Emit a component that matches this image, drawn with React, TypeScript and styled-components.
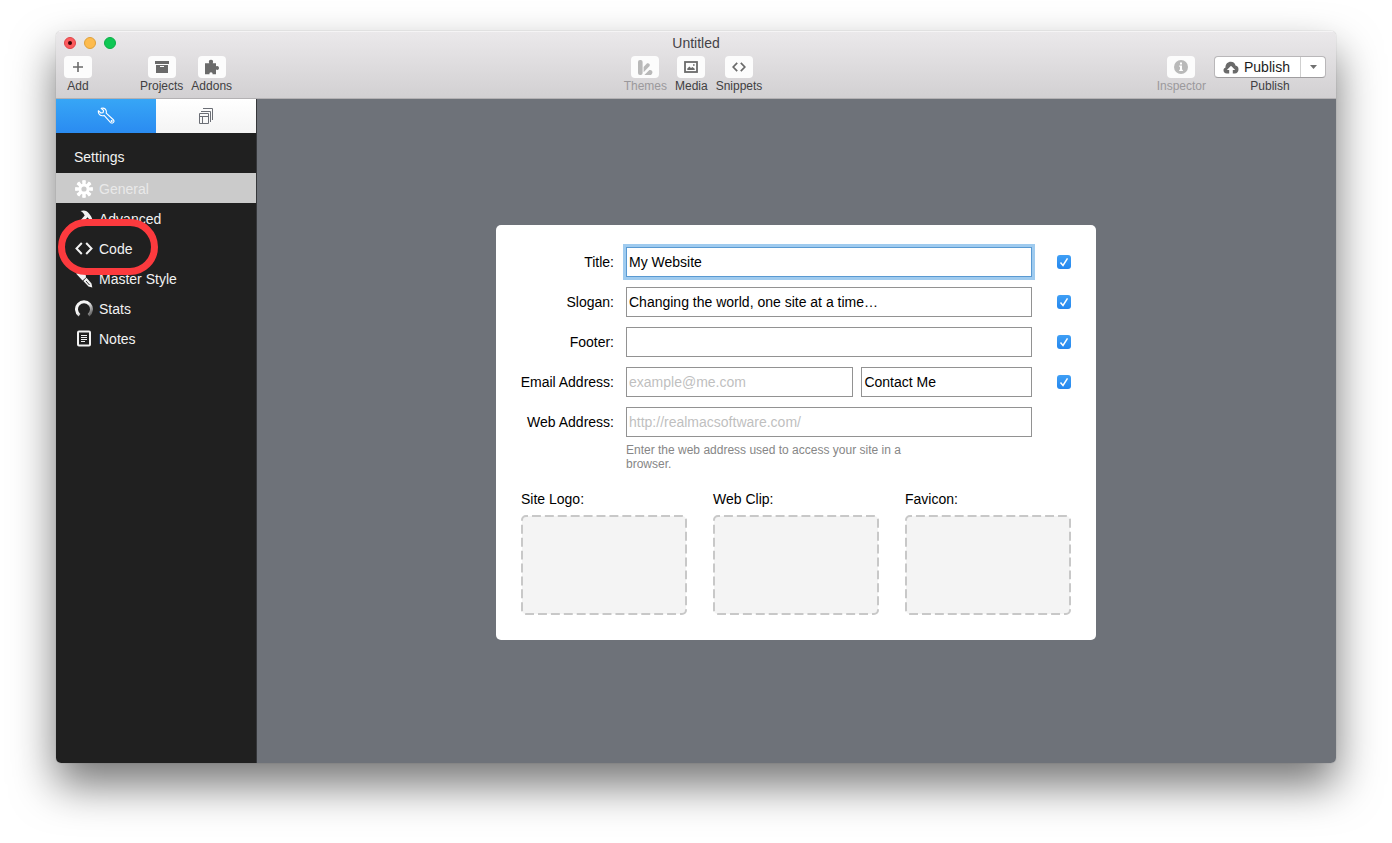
import React, { useId } from "react";
import styled, { createGlobalStyle, css } from "styled-components";

const GlobalStyle = createGlobalStyle`
  *, *::before, *::after { box-sizing: border-box; }
  body {
    margin: 0;
    background: #fff;
    color: #000;
    font-family: "Liberation Sans", Arial, sans-serif;
    font-size: 14px;
    line-height: 16px;
  }
  button, input { font: inherit; color: inherit; margin: 0; }
  svg { display: block; }
`;

const Desktop = styled.div`
  display: flex;
  min-height: 100vh;
  padding: 31px 56px 80px;
`;

const Window = styled.div`
  flex: 1;
  display: flex;
  flex-direction: column;
  min-width: 0;
  border-radius: 5px;
  overflow: hidden;
  box-shadow: 0 0 1px rgba(0, 0, 0, 0.4), 0 22px 44px rgba(0, 0, 0, 0.54);
`;

const TitleBar = styled.header`
  background: linear-gradient(#ebe9eb, #d2d0d2);
  border-bottom: 1px solid #b3b1b3;
  box-shadow: inset 0 1px 0 #f5f4f5;
  padding-top: 3px;
`;

const TitleRow = styled.div`
  display: grid;
  grid-template-columns: 1fr auto 1fr;
  align-items: center;
  padding: 0 8px;
  height: 17px;
`;

const Lights = styled.div`
  display: flex;
  gap: 8px;
`;

const Light = styled.button<{ $fill: string; $edge: string }>`
  display: grid;
  place-items: center;
  width: 12px;
  height: 12px;
  padding: 0;
  border: 1px solid ${(p) => p.$edge};
  border-radius: 50%;
  background: ${(p) => p.$fill};
`;

const UnsavedDot = styled.span`
  width: 4px;
  height: 4px;
  border-radius: 50%;
  background: #3c0306;
`;

const DocumentTitle = styled.h1`
  margin: 0;
  font-size: 14px;
  font-weight: 400;
  color: #444246;
`;

const Toolbar = styled.div`
  display: grid;
  grid-template-columns: 1fr auto 1fr;
  padding: 5px 10px 5px 8px;
`;

const ToolGroup = styled.div<{ $place?: "center" | "end" }>`
  display: flex;
  gap: 8px;
  ${(p) => p.$place === "center" && "padding-right: 4px;"}
  ${(p) => p.$place === "end" && "justify-content: flex-end;"}
`;

const ToolSpacer = styled.span`
  width: 32px;
`;

const Tool = styled.button<{ $muted?: boolean }>`
  display: flex;
  flex-direction: column;
  align-items: center;
  gap: 1px;
  padding: 0;
  border: 0;
  background: none;
  font-size: 12px;
  line-height: 14px;
  color: ${(p) => (p.$muted ? "#9b999c" : "#414042")};
`;

const ToolFace = styled.span<{ $muted?: boolean }>`
  display: grid;
  place-items: center;
  width: 28px;
  height: 22px;
  border-radius: 4px;
  background: #fcfcfc;
  color: ${(p) => (p.$muted ? "#b9b9b9" : "#6a6a6a")};
`;

const PublishBlock = styled.div`
  display: flex;
  flex-direction: column;
  align-items: center;
  gap: 1px;
  font-size: 12px;
  line-height: 14px;
  color: #414042;
`;

const SplitButton = styled.div`
  display: flex;
  height: 22px;
  border: 1px solid #b9b7b9;
  border-bottom-color: #9f9d9f;
  border-radius: 4px;
  background: #fff;
  overflow: hidden;
`;

const SplitMain = styled.button`
  display: flex;
  align-items: center;
  gap: 5px;
  width: 85px;
  padding: 0 0 0 8px;
  border: 0;
  background: none;
  font-size: 14px;
  color: #1c1c1c;
`;

const SplitArrow = styled.button`
  display: grid;
  place-items: center;
  width: 25px;
  padding: 0;
  border: 0;
  border-left: 1px solid #cfcfcf;
  background: none;
  color: #707070;
`;

const Body = styled.div`
  flex: 1;
  display: flex;
`;

const Sidebar = styled.nav`
  width: 201px;
  flex: none;
  background: #202020;
  border-right: 1px solid #35373a;
`;

const Tabs = styled.div`
  display: grid;
  grid-template-columns: 1fr 1fr;
  height: 34px;
`;

const Tab = styled.button<{ $active?: boolean }>`
  display: grid;
  place-items: center;
  padding: 0;
  border: 0;
  ${(p) =>
    p.$active
      ? css`
          background: linear-gradient(#37a6f6, #2a8bf1);
          color: #fff;
        `
      : css`
          background: linear-gradient(#fff, #f4f4f4);
          color: #6b6e75;
        `}
`;

const SidebarHeading = styled.h2`
  margin: 0;
  padding: 16px 18px 8px;
  font-size: 14px;
  line-height: 16px;
  font-weight: 400;
  color: #f2f2f2;
`;

const List = styled.ul`
  list-style: none;
  margin: 0;
  padding: 0;
`;

const Item = styled.li`
  position: relative;
`;

const ItemButton = styled.button<{ $selected?: boolean }>`
  display: flex;
  align-items: center;
  gap: 6px;
  width: 100%;
  height: 30px;
  padding: 2px 19px 0;
  border: 0;
  text-align: left;
  background: ${(p) => (p.$selected ? "#cbcbcb" : "transparent")};
  color: ${(p) => (p.$selected ? "#e9e9e9" : "#f2f2f2")};
`;

const Ring = styled.span`
  position: absolute;
  z-index: 1;
  top: -14px;
  left: 2px;
  width: 100px;
  height: 56px;
  border: 7px solid #fc3a3e;
  border-radius: 28px;
  pointer-events: none;
`;

const Workspace = styled.main`
  flex: 1;
  display: grid;
  place-items: center;
  padding: 27px 25px 24px 24px;
  background: #6e7279;
`;

const Card = styled.form`
  width: 100%;
  max-width: 600px;
  padding: 22px 25px 25px;
  border-radius: 5px;
  background: #fff;
`;

const Fields = styled.div`
  display: grid;
  gap: 10px;
`;

const Row = styled.div`
  display: grid;
  grid-template-columns: 93px 1fr 27px;
  column-gap: 12px;
  align-items: center;
`;

const FieldLabel = styled.label`
  justify-self: end;
  white-space: nowrap;
`;

const Pair = styled.div`
  display: grid;
  grid-template-columns: 4fr 3fr;
  gap: 8px;
`;

const TextBox = styled.input<{ $focused?: boolean }>`
  width: 100%;
  min-width: 0;
  height: 30px;
  padding: 0 2px;
  border: 1px solid ${(p) => (p.$focused ? "#5a9ad2" : "#929292")};
  outline: none;
  background: #fff;
  ${(p) => p.$focused && "box-shadow: 0 0 0 3px #9fcbef;"}
  &::placeholder { color: #bfbfbf; opacity: 1; }
`;

const CheckWrap = styled.span`
  display: grid;
  justify-self: end;
  width: 14px;
  height: 14px;
  & > * { grid-area: 1 / 1; }
`;

const Check = styled.input`
  appearance: none;
  width: 14px;
  height: 14px;
  border-radius: 3px;
  background: linear-gradient(#3f9ff5, #2487ee);
`;

const CheckMark = styled.svg`
  pointer-events: none;
`;

const Hint = styled.p`
  width: 280px;
  margin: 6px 0 0 105px;
  font-size: 12px;
  line-height: 14px;
  color: #868686;
`;

const Wells = styled.div`
  display: grid;
  grid-template-columns: repeat(3, 1fr);
  gap: 26px;
  margin-top: 20px;
`;

const WellBlock = styled.div`
  display: grid;
  gap: 8px;
`;

const Well = styled.button`
  display: block;
  width: 100%;
  height: 100px;
  padding: 0;
  border: 0;
  background: none;
`;

const icon = (w: number, h = w) => ({
  width: w,
  height: h,
  viewBox: `0 0 ${w} ${h}`,
  fill: "none",
  "aria-hidden": true,
});

const PlusIcon = () => (
  <svg {...icon(12)} stroke="currentColor" strokeWidth="1.6"><path d="M6 1v10M1 6h10" /></svg>
);
const BoxIcon = () => (
  <svg {...icon(14, 12)} fill="currentColor">
    <path d="M0 0h14v3H0z" />
    <path fillRule="evenodd" d="M1 4h12v8H1zM5 5v1h4V5z" />
  </svg>
);
const PuzzleIcon = () => (
  <svg {...icon(16)} fill="currentColor">
    <path d="M1 4.200h4.300C4.300 2.500 5 .7 7 .7s2.700 1.800 1.700 3.500H12v3.300c1.200-1 3-.4 3 1.500s-1.800 2.500-3 1.500v4.700H8.500c.3-1.200-.5-1.900-1.500-1.900s-1.800.7-1.500 1.900H1z" />
  </svg>
);
const ThemesIcon = () => (
  <svg {...icon(15)} fill="currentColor">
    <rect width="4.600" height="15" rx="2" />
    <path d="M5.600 7 8.600 3.700c1.500-1.300 4 .3 3 2.300L5.600 12.300z" />
    <path d="m6.400 15 5-5c2.700-.7 3.800 2.300 2.500 4l-1 1z" />
  </svg>
);
const MediaIcon = () => (
  <svg {...icon(14, 12)}>
    <rect x="1" y="1" width="12" height="10" stroke="currentColor" strokeWidth="1.800" />
    <path fill="currentColor" d="M3.300 9V7.600L5.500 5.500 7 7l1.500-1 2.200 1.800V9zM9 3.200h1.600v1.600H9z" />
  </svg>
);
const SnippetsIcon = () => (
  <svg {...icon(14, 10)} stroke="currentColor" strokeWidth="1.700">
    <path d="M5.200.8 1.200 5l4 4.200M8.800.8l4 4.200-4 4.200" />
  </svg>
);
const InfoIcon = () => (
  <svg {...icon(14)}>
    <circle cx="7" cy="7" r="7" fill="currentColor" />
    <path d="M6 2.500h2v2H6zM5.200 5.600H8v4.200h.9v1.200H5.200V9.800H6V6.800h-.8z" fill="#fff" />
  </svg>
);
const CloudIcon = () => (
  <svg {...icon(16, 13)} fill="#6a6a6a">
    <path d="M4 12.500C1.500 12.500.5 11 .5 9.300c0-1.500.8-2.500 2-2.900C2.300 3 4.800.7 7.800.7c2.600 0 4.300 1.600 4.700 3.800 1.900.3 3 1.700 3 3.800 0 2.500-1.300 4.200-3.800 4.200H9.800V9h2.400L8 4.800 3.900 9h2.300v3.500z" />
  </svg>
);
const CaretIcon = () => (
  <svg {...icon(7, 4)} fill="currentColor"><path d="M0 0h7L3.500 4z" /></svg>
);
const WrenchIcon = () => (
  <svg {...icon(18)} stroke="currentColor" strokeWidth="1.100" strokeLinejoin="round">
    <path d="M4.200 1.400c2-.6 4.300.2 5 2.300.3.900.2 1.600 0 2.400l6.900 6.400c1 1 1 2.200.3 3s-2 .8-3-.2L7.100 8.400c-2 .7-4.200 0-5.200-1.700-.6-1-.7-2-.5-3l2.500 2.300 2.200-.4.500-2.100z" />
    <circle cx="14.700" cy="14" r=".5" />
  </svg>
);
const PagesIcon = () => (
  <svg {...icon(14, 16)} stroke="currentColor">
    <path d="M.5 5.500h9v10h-9zM.5 8.500h9M3.500 8.500v7M2 3.500h9.500V14M4 .5h9.500V12" />
  </svg>
);
const GearIcon = () => (
  <svg {...icon(18)} viewBox="-9 -9 18 18">
    <g fill="#fff">
      {[0, 45, 90, 135, 180, 225, 270, 315].map((a) => (
        <path key={a} transform={`rotate(${a})`} d="M-1.600-4.500-1.900-8.600q1.900-.8 3.800 0L1.600-4.500z" />
      ))}
    </g>
    <circle r="4.100" stroke="#fff" strokeWidth="3" />
  </svg>
);
const HammerIcon = () => (
  <svg {...icon(18)} fill="#f2f2f2">
    <path d="M5.500 1C9-.3 12 .5 14 3.500l2 2.700 1.200 2.600-2.200 1.400-2.500-3L4 17 1.500 15 9.700 5.500C8.700 3 7.500 2 5.500 1z" />
  </svg>
);
const CodeIcon = () => (
  <svg {...icon(18)} stroke="#f2f2f2" strokeWidth="2">
    <path d="M6.800 3 1.500 8.500l5.300 5.500M11.200 3l5.300 5.500-5.300 5.500" />
  </svg>
);
const BrushIcon = () => (
  <svg {...icon(18)} fill="#f2f2f2">
    <path d="M1 3.500 10.500 2 11 7.500 7.500 10.500zM8.300 11l3.200-3.200 5 5.700.8 4-3.800-1z" />
    <path d="m11 11 3.500 4" stroke="#202020" strokeWidth=".9" />
  </svg>
);
const StatsIcon = () => {
  const id = useId();
  return (
    <svg {...icon(18)}>
      <defs>
        <linearGradient id={id} x1="0" y1="0" x2="1" y2="1">
          <stop offset=".45" stopColor="#f4f4f4" />
          <stop offset="1" stopColor="#555" />
        </linearGradient>
      </defs>
      <path d="M4.500 15.200a7.500 7.500 0 1 1 9 0" stroke={`url(#${id})`} strokeWidth="3" />
    </svg>
  );
};
const NotesIcon = () => (
  <svg {...icon(18)} stroke="#f2f2f2">
    <rect x="3" y="1.500" width="12" height="14" rx="1" strokeWidth="2" />
    <path d="M6 5.500h6M6 7.500h6M6 9.500h6M6 11.500h4" />
  </svg>
);

const settings = [
  { name: "General", Icon: GearIcon, selected: true },
  { name: "Advanced", Icon: HammerIcon },
  { name: "Code", Icon: CodeIcon, ringed: true },
  { name: "Master Style", Icon: BrushIcon },
  { name: "Stats", Icon: StatsIcon },
  { name: "Notes", Icon: NotesIcon },
];

function ToolItem({ label, muted, children }: { label: string; muted?: boolean; children: React.ReactNode }) {
  return (
    <Tool type="button" $muted={muted} disabled={muted}>
      <ToolFace $muted={muted}>{children}</ToolFace>
      {label}
    </Tool>
  );
}

function Toggle({ label }: { label: string }) {
  return (
    <CheckWrap>
      <Check type="checkbox" defaultChecked aria-label={label} />
      <CheckMark {...icon(14)} stroke="#fff" strokeWidth="1.500">
        <path d="m3.500 7.500 2.500 3L10.500 3.300" />
      </CheckMark>
    </CheckWrap>
  );
}

function ImageWell({ label }: { label: string }) {
  const id = useId();
  return (
    <WellBlock>
      <label htmlFor={id}>{label}</label>
      <Well type="button" id={id}>
        <svg width="100%" height="100%" viewBox="0 0 166 100" preserveAspectRatio="none" aria-hidden="true">
          <rect
            x="1"
            y="1"
            width="164"
            height="98"
            rx="4"
            fill="#f4f4f4"
            stroke="#c8c8c8"
            strokeWidth="2"
            pathLength="520"
            strokeDasharray="9 4"
            strokeDashoffset="7"
          />
        </svg>
      </Well>
    </WellBlock>
  );
}

export default function App() {
  return (
    <>
      <GlobalStyle />
      <Desktop>
        <Window>
          <TitleBar>
            <TitleRow>
              <Lights>
                <Light type="button" aria-label="Close" $fill="#fc5b5e" $edge="#df4448">
                  <UnsavedDot />
                </Light>
                <Light type="button" aria-label="Minimize" $fill="#fdbb4e" $edge="#dfa03a" />
                <Light type="button" aria-label="Zoom" $fill="#0fc754" $edge="#0cae47" />
              </Lights>
              <DocumentTitle>Untitled</DocumentTitle>
            </TitleRow>
            <Toolbar>
              <ToolGroup>
                <ToolItem label="Add"><PlusIcon /></ToolItem>
                <ToolSpacer />
                <ToolItem label="Projects"><BoxIcon /></ToolItem>
                <ToolItem label="Addons"><PuzzleIcon /></ToolItem>
              </ToolGroup>
              <ToolGroup $place="center">
                <ToolItem label="Themes" muted><ThemesIcon /></ToolItem>
                <ToolItem label="Media"><MediaIcon /></ToolItem>
                <ToolItem label="Snippets"><SnippetsIcon /></ToolItem>
              </ToolGroup>
              <ToolGroup $place="end">
                <ToolItem label="Inspector" muted><InfoIcon /></ToolItem>
                <PublishBlock>
                  <SplitButton>
                    <SplitMain type="button"><CloudIcon />Publish</SplitMain>
                    <SplitArrow type="button" aria-label="Publish options"><CaretIcon /></SplitArrow>
                  </SplitButton>
                  Publish
                </PublishBlock>
              </ToolGroup>
            </Toolbar>
          </TitleBar>
          <Body>
            <Sidebar>
              <Tabs>
                <Tab type="button" aria-label="Settings" $active><WrenchIcon /></Tab>
                <Tab type="button" aria-label="Pages"><PagesIcon /></Tab>
              </Tabs>
              <SidebarHeading>Settings</SidebarHeading>
              <List>
                {settings.map(({ name, Icon, selected, ringed }) => (
                  <Item key={name}>
                    <ItemButton type="button" $selected={selected}><Icon />{name}</ItemButton>
                    {ringed && <Ring />}
                  </Item>
                ))}
              </List>
            </Sidebar>
            <Workspace>
              <Card>
                <Fields>
                  <Row>
                    <FieldLabel htmlFor="title">Title:</FieldLabel>
                    <TextBox id="title" defaultValue="My Website" $focused />
                    <Toggle label="Show title" />
                  </Row>
                  <Row>
                    <FieldLabel htmlFor="slogan">Slogan:</FieldLabel>
                    <TextBox id="slogan" defaultValue="Changing the world, one site at a time…" />
                    <Toggle label="Show slogan" />
                  </Row>
                  <Row>
                    <FieldLabel htmlFor="footer">Footer:</FieldLabel>
                    <TextBox id="footer" />
                    <Toggle label="Show footer" />
                  </Row>
                  <Row>
                    <FieldLabel htmlFor="email">Email Address:</FieldLabel>
                    <Pair>
                      <TextBox id="email" type="email" placeholder="example@me.com" />
                      <TextBox aria-label="Email link text" defaultValue="Contact Me" />
                    </Pair>
                    <Toggle label="Show email address" />
                  </Row>
                  <Row>
                    <FieldLabel htmlFor="web">Web Address:</FieldLabel>
                    <TextBox id="web" type="url" placeholder="http://realmacsoftware.com/" />
                  </Row>
                </Fields>
                <Hint>Enter the web address used to access your site in a browser.</Hint>
                <Wells>
                  <ImageWell label="Site Logo:" />
                  <ImageWell label="Web Clip:" />
                  <ImageWell label="Favicon:" />
                </Wells>
              </Card>
            </Workspace>
          </Body>
        </Window>
      </Desktop>
    </>
  );
}
